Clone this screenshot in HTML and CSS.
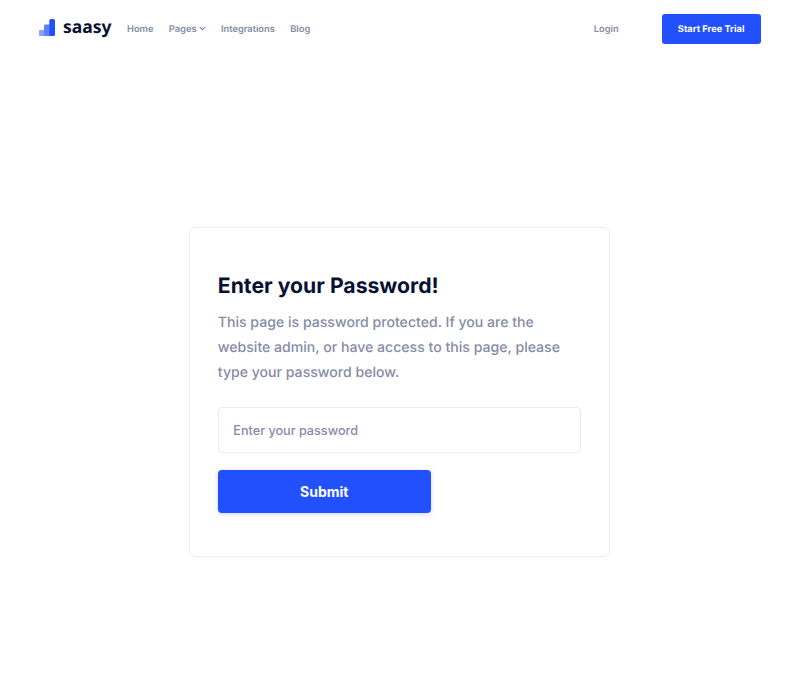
FILE: index.html
```html
<!DOCTYPE html>
<html lang="en">
<head>
<meta charset="utf-8">
<title>Saasy</title>
<link rel="stylesheet" href="styles.css">
</head>
<body>
<header class="nav">
  <a class="logo"><svg class="mark" width="16" height="17" viewBox="0 0 16 17"><rect x="0" y="11" width="7" height="6" rx="1.200" fill="#86a3ff"/><rect x="5" y="5.500" width="7" height="11.500" rx="1.200" fill="#5b82ff"/><rect x="10.300" y="0" width="5.700" height="17" rx="1.500" fill="#2250fc"/></svg><span class="word">saasy</span></a>
  <nav class="links">
    <a>Home</a>
    <a class="pages">Pages<svg class="chev" width="7" height="5" viewBox="0 0 7 5"><path d="M.6.8 3.500 3.700 6.400.8" fill="none" stroke="currentColor" stroke-width="1.100"/></svg></a>
    <a>Integrations</a>
    <a>Blog</a>
  </nav>
  <a class="login">Login</a>
  <a class="trial">Start Free Trial</a>
</header>
<main class="main">
  <form class="card">
    <h1>Enter your Password!</h1>
    <p>This page is password protected. If you are the website admin, or have access to this page, please type your password below.</p>
    <input class="field" type="password" placeholder="Enter your password">
    <button class="submit" type="button">Submit</button>
  </form>
</main>
</body>
</html>
```
FILE: styles.css
```css
* { box-sizing: border-box; }
body {
  margin: 0;
  height: 674px;
  background: #fff;
  color: #858ba5;
  font-family: Inter, sans-serif;
  text-rendering: geometricPrecision;
}
.nav {
  display: flex;
  align-items: center;
  height: 58px;
  padding: 0 39.400px 0 39px;
  font-size: 9.300px;
  font-weight: 600;
}
.logo { display: flex; align-items: center; width: 88px; }
.mark { margin: -3px 8px 0 0; }
.word {
  color: #091133;
  font: 700 17.500px/24px "Noto Sans", sans-serif;
  margin-top: -4px;
}
.links { display: flex; gap: 15.400px; padding-top: 1px; }
.chev { margin: 0 0 1px 2px; }
.login { margin-left: auto; margin-right: 43px; padding-top: 1px; }
.trial {
  width: 99px;
  height: 30px;
  border-radius: 3px;
  background: #2250fc;
  color: #fff;
  font-size: 9.300px;
  font-weight: 700;
  line-height: 32px;
  text-align: center;
}
.main { padding-top: 169px; }
.card {
  width: 421.500px;
  height: 330px;
  margin-left: 188.800px;
  padding: 43px 28px;
  border: 1px solid #e9eaee;
  border-radius: 7px;
}
h1 {
  margin: 0;
  color: #091133;
  font-size: 21.200px;
  line-height: 30px;
  font-weight: 700;
}
p {
  margin: 9px 0 21px;
  font-size: 14.100px;
  line-height: 25.200px;
  font-weight: 500;
}
.field {
  display: block;
  width: 363.500px;
  height: 46px;
  padding: 1px 14.500px 0;
  border: 1px solid #e9eaee;
  border-radius: 4px;
  font: 500 12.650px Inter, sans-serif;
}
.field::placeholder { color: #858ba5; opacity: 1; }
.submit {
  width: 213px;
  height: 43px;
  margin-top: 17px;
  border: 0;
  border-radius: 4px;
  background: #2250fc;
  color: #fff;
  font: 700 14px Inter, sans-serif;
  box-shadow: 0 1px 4px rgba(34, 80, 252, .25);
}
```
